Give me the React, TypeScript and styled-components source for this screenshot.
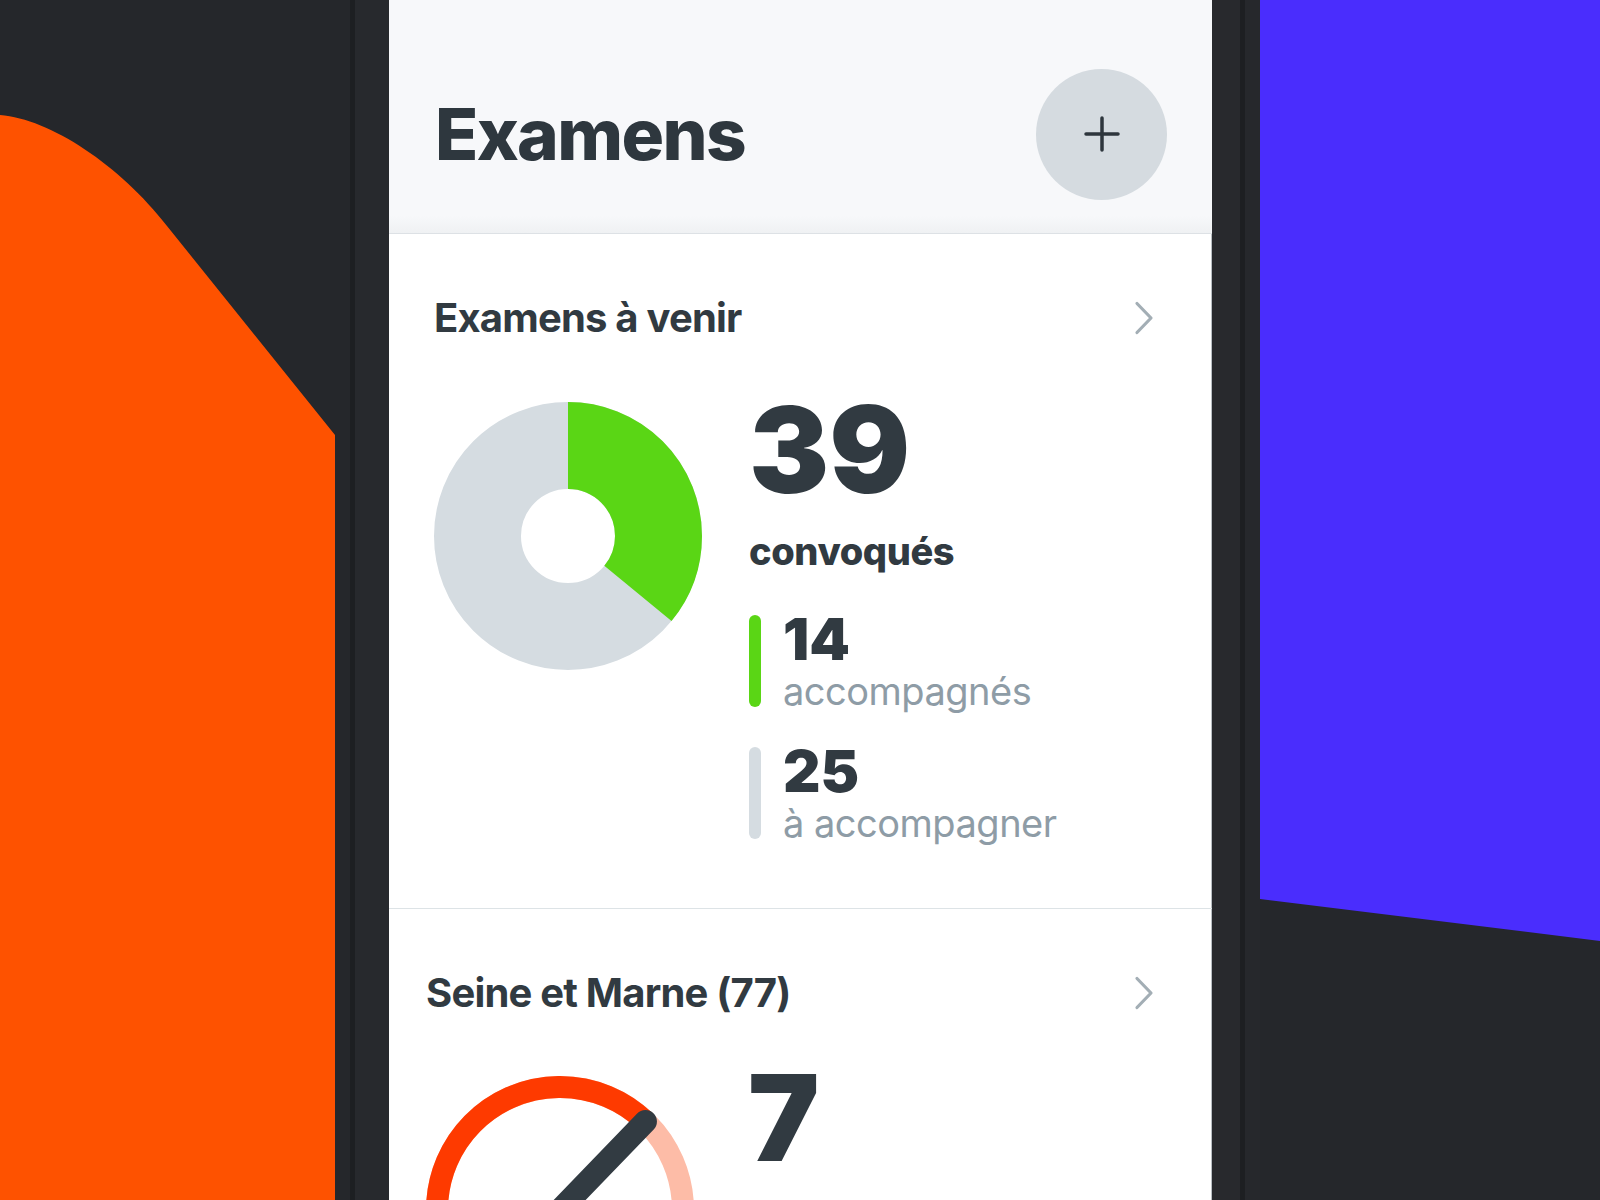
import React from 'react';
import styled, { createGlobalStyle } from 'styled-components';

const GlobalStyle = createGlobalStyle`
  html, body {
    margin: 0;
    padding: 0;
    background: #25272b;
    overflow: hidden;
  }
  body {
    font-family: Inter, "Noto Sans", "Liberation Sans", sans-serif;
    color: #313a41;
  }
`;

const Stage = styled.div`
  width: 1600px;
  height: 1200px;
  display: grid;
  grid-template-columns: 335px 54px 823px 48px 340px;
  background: #25272b;
  overflow: hidden;
`;

const Backdrop = styled.div`
  height: 1200px;

  svg {
    display: block;
  }
`;

const Bezel = styled.div<{ $side: 'left' | 'right' }>`
  height: 1200px;
  background: ${({ $side }) =>
    $side === 'left'
      ? 'linear-gradient(to right, #25272b 0, #25272b 15px, #1d1f22 15px, #1d1f22 20px, #27292d 20px)'
      : 'linear-gradient(to right, #28292d 0, #28292d 28px, #1d1f22 28px, #1d1f22 33px, #26282c 33px)'};
`;

const Screen = styled.div`
  height: 1200px;
  background: #ffffff;
  display: flex;
  flex-direction: column;
  overflow: hidden;
  box-shadow: inset -1px 0 0 #b9bec3;
`;

const Header = styled.header`
  box-sizing: border-box;
  height: 234px;
  flex-shrink: 0;
  padding: 35px 45px 0 46px;
  display: flex;
  align-items: center;
  justify-content: space-between;
  background: linear-gradient(to bottom, #f7f8fa 0, #f7f8fa 216px, #eff1f3 233px);
  border-bottom: 1px solid #dde1e5;
`;

const PageTitle = styled.h1`
  margin: 0;
  font-size: 71px;
  line-height: 1;
  font-weight: 800;
  letter-spacing: -1.6px;
  color: #2e373e;
`;

const RoundButton = styled.button`
  width: 131px;
  height: 131px;
  border: none;
  border-radius: 50%;
  background: #d5dbe0;
  display: flex;
  align-items: center;
  justify-content: center;
  padding: 0;
  cursor: pointer;
`;

const Card = styled.section<{ $inset: number }>`
  flex-shrink: 0;
  padding: 64px 58px 66px ${({ $inset }) => $inset}px;
  border-bottom: 1px solid #dde3e6;
`;

const CardHead = styled.div`
  display: flex;
  align-items: center;
  justify-content: space-between;
  height: 40px;
`;

const CardTitle = styled.h2`
  margin: 0;
  font-size: 40px;
  line-height: 1;
  font-weight: 700;
  letter-spacing: -0.8px;
  color: #313a41;
`;

const ChartRow = styled.div<{ $top: number; $gap: number }>`
  margin-top: ${({ $top }) => $top}px;
  display: flex;
  align-items: flex-start;
  gap: ${({ $gap }) => $gap}px;
`;

const Chart = styled.div<{ $offset: number }>`
  width: 268px;
  height: 268px;
  flex-shrink: 0;
  margin-top: ${({ $offset }) => $offset}px;

  svg {
    display: block;
  }
`;

const Stats = styled.div`
  display: flex;
  flex-direction: column;
`;

const BigNumber = styled.div`
  font-size: 120px;
  line-height: 1;
  font-weight: 900;
  letter-spacing: 0;
  margin-top: -2px;
  color: #313a41;
`;

const Caption = styled.div`
  margin-top: 22px;
  font-size: 38px;
  line-height: 1;
  font-weight: 800;
  letter-spacing: -0.4px;
  color: #313a41;
`;

const StatList = styled.div`
  margin-top: 41px;
  display: flex;
  flex-direction: column;
  gap: 33px;
`;

const StatItem = styled.div`
  display: flex;
  align-items: flex-start;
  gap: 22px;
`;

const Bar = styled.span<{ $color: string }>`
  width: 12px;
  height: 92px;
  margin-top: 4px;
  border-radius: 6px;
  background: ${({ $color }) => $color};
  flex-shrink: 0;
`;

const StatText = styled.div`
  display: flex;
  flex-direction: column;
`;

const StatValue = styled.div`
  font-size: 58px;
  line-height: 1;
  font-weight: 900;
  letter-spacing: 0;
  margin-top: -1px;
  color: #313a41;
`;

const StatLabel = styled.div`
  margin-top: 4px;
  font-size: 38px;
  line-height: 1;
  font-weight: 400;
  letter-spacing: -0.5px;
  color: #8e9ca6;
`;

const OrangeShape = () => (
  <svg width="335" height="1200" viewBox="0 0 335 1200">
    <path d="M0 115 C50 119 120 165 167 226 L335 435 L335 1200 L0 1200 Z" fill="#fe5200" />
  </svg>
);

const PurpleShape = () => (
  <svg width="340" height="1200" viewBox="0 0 340 1200">
    <polygon points="0,0 340,0 340,941 0,899" fill="#4a2dfd" />
  </svg>
);

const PlusIcon = () => (
  <svg width="36" height="36" viewBox="0 0 36 36">
    <path d="M18 2 V34 M2 18 H34" stroke="#2e363d" strokeWidth="3.5" strokeLinecap="round" fill="none" />
  </svg>
);

const Chevron = () => (
  <svg width="20" height="34" viewBox="0 0 20 34">
    <polyline
      points="3,2.5 17,17 3,31.5"
      stroke="#a3aeb5"
      strokeWidth="3.2"
      strokeLinecap="round"
      strokeLinejoin="round"
      fill="none"
    />
  </svg>
);

const Donut = ({ value, total }: { value: number; total: number }) => {
  const r = 90.5;
  const c = 2 * Math.PI * r;
  const part = (value / total) * c;
  return (
    <svg width="268" height="268" viewBox="0 0 268 268">
      <circle cx="134" cy="134" r={r} fill="none" stroke="#d5dce1" strokeWidth="87" />
      <circle
        cx="134"
        cy="134"
        r={r}
        fill="none"
        stroke="#5ad615"
        strokeWidth="87"
        strokeDasharray={`${part} ${c}`}
        transform="rotate(-90 134 134)"
      />
    </svg>
  );
};

const polar = (a: number, r: number) => {
  const rad = (a * Math.PI) / 180;
  return [134 + r * Math.sin(rad), 134 - r * Math.cos(rad)];
};

const arc = (from: number, to: number, r: number) => {
  const [x1, y1] = polar(from, r);
  const [x2, y2] = polar(to, r);
  const large = to - from > 180 ? 1 : 0;
  return `M${x1} ${y1} A${r} ${r} 0 ${large} 1 ${x2} ${y2}`;
};

const Gauge = ({ angle }: { angle: number }) => {
  const [nx, ny] = polar(angle, 123);
  return (
    <svg width="268" height="268" viewBox="0 0 268 268" overflow="visible">
      <path d={arc(-135, 135, 123)} fill="none" stroke="#fdbca7" strokeWidth="22" />
      <path d={arc(-135, angle, 123)} fill="none" stroke="#fe3a00" strokeWidth="22" />
      <line x1="134" y1="134" x2={nx} y2={ny} stroke="#323b42" strokeWidth="23" strokeLinecap="round" />
    </svg>
  );
};

const App = () => {
  return (
    <Stage>
      <GlobalStyle />
      <Backdrop>
        <OrangeShape />
      </Backdrop>
      <Bezel $side="left" />

      <Screen>
        <Header>
          <PageTitle>Examens</PageTitle>
          <RoundButton aria-label="Ajouter">
            <PlusIcon />
          </RoundButton>
        </Header>

        <Card $inset={45}>
          <CardHead>
            <CardTitle>Examens à venir</CardTitle>
            <Chevron />
          </CardHead>
          <ChartRow $top={54} $gap={47}>
            <Chart $offset={10}>
              <Donut value={14} total={39} />
            </Chart>
            <Stats>
              <BigNumber>39</BigNumber>
              <Caption>convoqués</Caption>
              <StatList>
                <StatItem>
                  <Bar $color="#5ad615" />
                  <StatText>
                    <StatValue>14</StatValue>
                    <StatLabel>accompagnés</StatLabel>
                  </StatText>
                </StatItem>
                <StatItem>
                  <Bar $color="#d5dce1" />
                  <StatText>
                    <StatValue>25</StatValue>
                    <StatLabel>à accompagner</StatLabel>
                  </StatText>
                </StatItem>
              </StatList>
            </Stats>
          </ChartRow>
        </Card>

        <Card $inset={37}>
          <CardHead>
            <CardTitle>Seine et Marne (77)</CardTitle>
            <Chevron />
          </CardHead>
          <ChartRow $top={47} $gap={54}>
            <Chart $offset={16}>
              <Gauge angle={44} />
            </Chart>
            <Stats>
              <BigNumber>7</BigNumber>
            </Stats>
          </ChartRow>
        </Card>
      </Screen>

      <Bezel $side="right" />
      <Backdrop>
        <PurpleShape />
      </Backdrop>
    </Stage>
  );
};

export default App;
